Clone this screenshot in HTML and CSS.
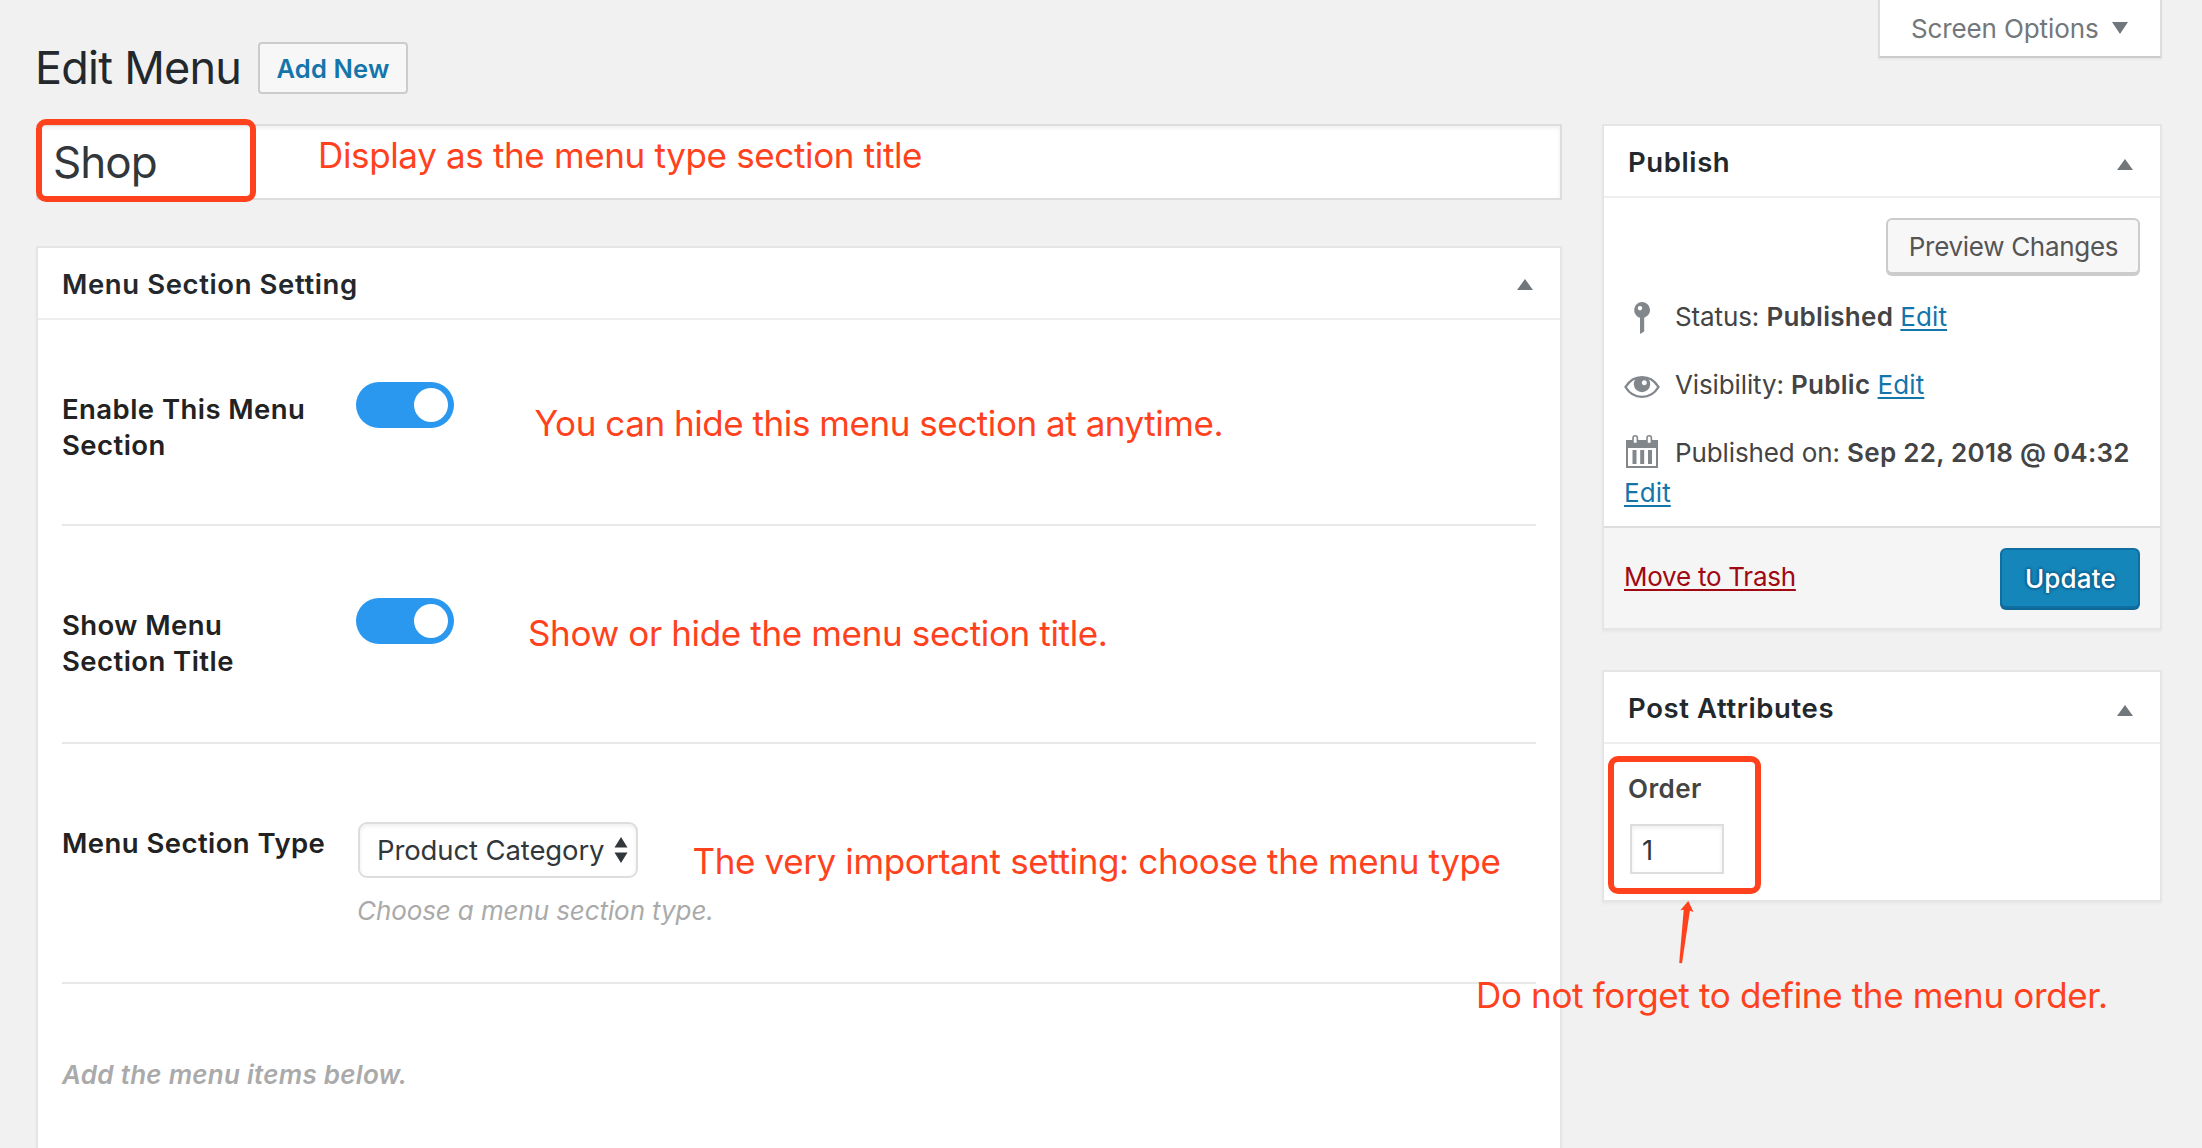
FILE: index.html
```html
<!DOCTYPE html>
<html lang="en">
<head>
<meta charset="utf-8">
<title>Edit Menu</title>
<link rel="stylesheet" href="styles.css">
</head>
<body>
<div class="page">
  <header class="topbar">
    <div class="heading">
      <h1 class="heading-title">Edit Menu</h1>
      <a class="add-new">Add New</a>
    </div>
    <button class="screen-options">Screen Options <span class="caret caret-down"></span></button>
  </header>

  <div class="columns">
    <main class="main">
      <div class="title-input">Shop</div>

      <section class="box box-main">
        <div class="box-header"><h2 class="box-title">Menu Section Setting</h2><span class="caret caret-up"></span></div>
        <div class="fields">
          <div class="field field-first">
            <div class="label">Enable This Menu Section</div>
            <div class="toggle"><span class="knob"></span></div>
          </div>
          <div class="field">
            <div class="label">Show Menu Section Title</div>
            <div class="toggle"><span class="knob"></span></div>
          </div>
          <div class="field field-type">
            <div class="label">Menu Section Type</div>
            <div class="control">
              <div class="select">Product Category
                <svg class="select-arrows" viewBox="0 0 14 26"><path d="M7 0L13.5 10.500H.5zM7 26L.5 15.500h13z" fill="#32373c"/></svg>
              </div>
              <div class="hint">Choose a menu section type.</div>
            </div>
          </div>
          <div class="note">Add the menu items below.</div>
        </div>
      </section>
    </main>

    <aside class="side">
      <section class="box">
        <div class="box-header"><h2 class="box-title">Publish</h2><span class="caret caret-up"></span></div>
        <div class="publish">
          <button class="preview">Preview Changes</button>
          <div class="meta">
            <svg class="icon" viewBox="0 0 36 36"><path fill="#82878c" fill-rule="evenodd" d="M18 2a8 8 0 0 1 2.200 15.700V31.500L16 34V17.700A8 8 0 0 1 18 2zM16 6a2.200 2.200 0 1 0 .01 0z"/></svg>Status: <b>Published</b> <a class="link">Edit</a>
          </div>
          <div class="meta">
            <svg class="icon" viewBox="0 0 36 36"><path fill="none" stroke="#82878c" stroke-width="2.400" d="M1.500 19C9.500 5.800 26.500 5.800 34.500 19C26.500 32.200 9.500 32.200 1.500 19z"/><path fill="#82878c" fill-rule="evenodd" d="M11.500 11C14 9 22 9 24.500 11A8.200 8.200 0 1 1 11.500 11zM20.300 12.200a2.500 2.500 0 1 0 .01 0z"/></svg>Visibility: <b>Public</b> <a class="link">Edit</a>
          </div>
          <div class="meta meta-last">
            <svg class="icon" viewBox="0 0 36 36"><path fill="#82878c" fill-rule="evenodd" d="M2 4h32v28H2zM4 12v18h28V12z"/><path fill="#82878c" d="M8.500 14h4v14h-4zM16.200 14h4v14h-4zM24 14h4v14h-4z"/><path fill="#fff" stroke="#82878c" stroke-width="1.600" d="M9 7.500V2a2.200 2.200 0 0 1 4.400 0V7.500zM23 7.500V2a2.200 2.200 0 0 1 4.400 0V7.500z"/></svg>Published on: <b>Sep 22, 2018 @ 04:32</b> <a class="link">Edit</a>
          </div>
        </div>
        <div class="publish-footer">
          <a class="trash">Move to Trash</a>
          <button class="update">Update</button>
        </div>
      </section>

      <section class="box">
        <div class="box-header"><h2 class="box-title">Post Attributes</h2><span class="caret caret-up"></span></div>
        <div class="attributes">
          <div class="order-label">Order</div>
          <div class="order-input">1</div>
        </div>
      </section>
    </aside>
  </div>

  <div class="frame frame-title"></div>
  <div class="frame frame-order"></div>
  <svg class="arrow" viewBox="0 0 16 66"><path fill="#ff421d" d="M10.300 1L15.500 12L11.900 10.800L4 63.300L1.200 63L5.700 9.800L2.300 10.200z"/></svg>
  <p class="callout callout-title">Display as the menu type section title</p>
  <p class="callout callout-enable">You can hide this menu section at anytime.</p>
  <p class="callout callout-show">Show or hide the menu section title.</p>
  <p class="callout callout-type">The very important setting: choose the menu type</p>
  <p class="callout callout-order">Do not forget to define the menu order.</p>
</div>
</body>
</html>
```
FILE: styles.css
```css
* { box-sizing: border-box; }
body {
  margin: 0;
  background: #f1f1f1;
  color: #444;
  font: 400 26px/36px Inter, "Liberation Sans", sans-serif;
  letter-spacing: -.12px;
}
h1, h2, p { margin: 0; }
button { font: inherit; letter-spacing: inherit; }

.page {
  position: relative;
  display: flex;
  flex-direction: column;
  height: 1148px;
  padding: 0 40px 0 36px;
  overflow: hidden;
}

/* Top bar */
.topbar { display: flex; justify-content: space-between; align-items: flex-start; height: 124px; flex: none; }
.heading { display: flex; align-items: center; gap: 18px; padding-top: 42px; }
.heading-title { width: 204px; font-size: 45px; font-weight: 400; line-height: 52px; letter-spacing: -.75px; color: #23282d; white-space: nowrap; text-indent: -1px; }
.add-new {
  width: 150px; height: 52px; padding-top: 1px;
  border: 2px solid #ccc; border-radius: 4px; background: #f7f7f7;
  color: #1475ab; font-size: 25.5px; font-weight: 600; line-height: 47px; letter-spacing: .15px; text-align: center;
}
.screen-options {
  display: flex; align-items: center; gap: 14px;
  width: 284px; height: 58px; padding: 2px 0 0 31px;
  border: 2px solid #ddd; border-top: 0; border-bottom-color: #ccc;
  background: #fff; color: #72777c;
  box-shadow: 0 2px 2px rgba(0, 0, 0, .04);
}
.caret { width: 0; height: 0; border: 8px solid transparent; }
.caret-down { margin-top: -2px; border-top: 12px solid #72777c; border-bottom: 0; }
.caret-up { border-bottom: 11.500px solid #72777c; border-top: 0; }

.columns { display: grid; grid-template-columns: 1526px 560px; gap: 40px; flex: 1; }
.main { display: flex; flex-direction: column; gap: 46px; }
.side { display: flex; flex-direction: column; gap: 40px; }

.title-input {
  height: 76px; padding-left: 15px;
  border: 2px solid #ddd; background: #fff;
  box-shadow: inset 0 2px 4px rgba(0, 0, 0, .07);
  color: #32373c; font-size: 44px; line-height: 72px; letter-spacing: -1px;
}

/* Boxes */
.box { border: 2px solid #e5e5e5; background: #fff; box-shadow: 0 2px 2px rgba(0, 0, 0, .04); }
.box-main { flex: 1; border-bottom: 0; }
.box-header {
  display: flex; align-items: center; justify-content: space-between;
  height: 72px; padding: 1px 27px 0 24px;
  border-bottom: 2px solid #eee;
}
.box-title { color: #23282d; font-size: 27.5px; font-weight: 600; letter-spacing: .6px; }
.box-header .caret { margin-top: 6px; }
.box-main .box-header .caret { margin-top: 2px; }

/* Fields */
.fields { padding: 0 24px; }
.field { display: flex; align-items: flex-start; height: 218px; padding-top: 72px; border-bottom: 2px solid #e8e8e8; }
.field-first { height: 206px; padding-top: 62px; }
.field-type { height: 240px; }
.label { width: 264px; margin-right: 30px; padding-top: 9px; color: #222; font-size: 27.5px; font-weight: 600; letter-spacing: .44px; }
.toggle { display: flex; justify-content: flex-end; align-items: center; width: 98px; height: 46px; padding-right: 6px; border-radius: 23px; background: #2b98f0; }
.knob { width: 34px; height: 34px; border-radius: 50%; background: #fff; }
.control { padding: 6px 0 0 2px; }
.select {
  display: flex; align-items: center; justify-content: space-between;
  width: 280px; height: 56px; padding: 0 8px 1px 17px;
  border: 2px solid #ddd; border-radius: 9px; background: #fff;
  box-shadow: inset 0 2px 4px rgba(0, 0, 0, .07);
  color: #32373c; font-size: 27.5px; white-space: nowrap;
}
.select-arrows { width: 14px; height: 26px; }
.hint { margin-top: 15px; margin-left: -1px; color: #aaa; font-style: italic; letter-spacing: -.1px; }
.note { padding: 73px 0 0 0; color: #aaa; font-style: italic; font-weight: 600; letter-spacing: .27px; }

/* Publish */
.publish { display: flex; flex-direction: column; height: 328px; padding: 20px 20px 0; }
.preview {
  align-self: flex-end; width: 254px; height: 56px; margin-bottom: 23px; padding: 2px 0 0 1px;
  border: 2px solid #ccc; border-radius: 6px; background: #f7f7f7;
  box-shadow: 0 2px 0 #ccc; color: #555; letter-spacing: -.3px;
}
.meta { height: 40px; margin-bottom: 28px; line-height: 40px; }
.meta-last { height: 80px; margin-bottom: 0; }
.meta b { font-weight: 600; letter-spacing: .27px; }
.icon { width: 36px; height: 36px; margin-right: 15px; vertical-align: -10px; overflow: visible; }
.link, .trash {
  color: #1475ab;
  text-decoration: underline; text-decoration-thickness: 2px; text-underline-offset: 3px; text-decoration-skip-ink: none;
}
.link { letter-spacing: .1px; }
.publish-footer {
  display: flex; align-items: flex-start; justify-content: space-between;
  height: 102px; padding: 20px 20px 0;
  border-top: 2px solid #ddd; background: #f5f5f5;
}
.trash { margin-top: 11px; color: #a00911; letter-spacing: -.25px; }
.update {
  width: 140px; height: 60px; padding: 2px 0 0 1px;
  border: 2px solid #0f6fa3; border-radius: 6px; background: #1586ba;
  box-shadow: 0 2px 0 #0f6898; color: #fff; font-weight: 500; letter-spacing: .2px;
  text-shadow: 0 -2px 2px #0f6898, 2px 0 2px #0f6898, 0 2px 2px #0f6898, -2px 0 2px #0f6898;
}

/* Post attributes */
.attributes { height: 156px; padding: 27px 24px 0; }
.order-label { font-weight: 600; letter-spacing: .4px; }
.order-input {
  width: 94px; height: 50px; margin: 17px 0 0 2px; padding-left: 10px;
  border: 2px solid #ddd; box-shadow: inset 0 2px 4px rgba(0, 0, 0, .07);
  color: #32373c; font-size: 27.5px; line-height: 49px;
}

/* Annotations drawn over the page */
.frame { position: absolute; border: 6px solid #ff421d; border-radius: 10px; }
.frame-title { left: 36px; top: 119px; width: 220px; height: 83px; }
.frame-order { left: 1608px; top: 756px; width: 153px; height: 138px; }
.arrow { position: absolute; left: 1678px; top: 900px; width: 16px; height: 66px; }
.callout { position: absolute; color: #ff421d; font-size: 35px; line-height: 44px; white-space: nowrap; }
.callout-title { left: 318px; top: 133px; letter-spacing: -.35px; }
.callout-enable { left: 534.5px; top: 401px; letter-spacing: -.45px; }
.callout-show { left: 528px; top: 611px; letter-spacing: -.35px; }
.callout-type { left: 692.5px; top: 839px; letter-spacing: -.37px; }
.callout-order { left: 1476px; top: 973px; letter-spacing: -.34px; }
```
